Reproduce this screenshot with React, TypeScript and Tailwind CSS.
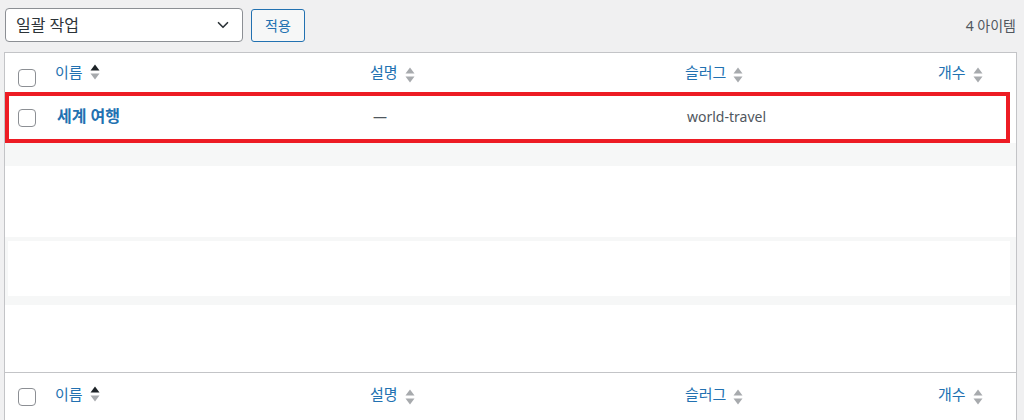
import { ChevronDown } from 'lucide-react';

const FONT = '"Noto Sans", "Noto Sans CJK KR", sans-serif';

interface SortIconProps {
  active?: boolean;
}

function SortIcon({ active = false }: SortIconProps) {
  return (
    <svg
      width="10"
      height="16"
      viewBox="0 0 10 16"
      className={`ml-[7px] shrink-0 ${active ? '-mt-[2px]' : 'mt-[5px]'}`}
      aria-hidden="true"
    >
      <path d="M5 0.5 L9.5 6.5 L0.5 6.5 Z" fill={active ? '#1d2327' : '#a7aaad'} />
      <path d="M0.5 9.5 L9.5 9.5 L5 15.5 Z" fill="#a7aaad" />
    </svg>
  );
}

function Checkbox() {
  return <span className="block h-[18px] w-[18px] rounded-[4px] border border-[#8c8f94] bg-white" />;
}

function HeaderRow({ footer }: { footer?: boolean }) {
  return (
    <div
      className={`flex items-center text-[15px] text-[#2271b1] ${
        footer ? 'h-[44px] border-t border-[#c3c4c7]' : 'h-[39px]'
      }`}
    >
      <div className={`flex w-[50px] shrink-0 justify-start pl-[13px] ${footer ? 'mt-[4px]' : 'mt-[10px]'}`}>
        <Checkbox />
      </div>
      <div className="flex w-[315px] shrink-0 items-center">
        <span>이름</span>
        <SortIcon active />
      </div>
      <div className="flex w-[315px] shrink-0 items-center">
        <span>설명</span>
        <SortIcon />
      </div>
      <div className="flex w-[253px] shrink-0 items-center">
        <span>슬러그</span>
        <SortIcon />
      </div>
      <div className="flex items-center">
        <span>개수</span>
        <SortIcon />
      </div>
    </div>
  );
}

export default function App() {
  return (
    <div className="h-[420px] overflow-hidden bg-[#f0f0f1]" style={{ fontFamily: FONT }}>
      {/* Bulk actions bar */}
      <div className="flex items-center pl-[5px] pr-[8px] pt-[8px]">
        <div className="flex h-[34px] w-[238px] items-center justify-between rounded-[4px] border border-[#8c8f94] bg-white pl-[10px] pr-[10px] text-[16px] text-[#2c3338]">
          <span>일괄 작업</span>
          <ChevronDown className="h-[18px] w-[18px] text-[#2c3338]" strokeWidth={2.2} />
        </div>
        <button className="ml-[8px] flex h-[33px] w-[54px] items-center justify-center rounded-[3px] border border-[#2271b1] bg-[#f6f7f7] text-[14px] text-[#2271b1]">
          적용
        </button>
        <span className="ml-auto text-[14px] text-[#50575e]">4 아이템</span>
      </div>

      {/* Terms table */}
      <div className="ml-[4px] mr-[7px] mt-[10px] border border-[#c3c4c7] bg-white pb-[10px]">
        <HeaderRow />

        {/* Highlighted row */}
        <div className="mr-[6px] flex h-[51px] items-center border-4 border-[#ed1c24] text-[14px] text-[#50575e]">
          <div className="flex w-[48px] shrink-0 pl-[9px]">
            <Checkbox />
          </div>
          <div className="-mt-[3px] w-[316px] shrink-0 text-[16px] font-bold text-[#2271b1]">세계 여행</div>
          <div className="-mt-[3px] w-[314px] shrink-0">—</div>
          <div className="-mt-[3px]">world-travel</div>
        </div>

        {/* Empty rows */}
        <div className="h-[23px] bg-[#f6f7f7]" />
        <div className="h-[71px] bg-white" />
        <div className="h-[4px] bg-[#f6f7f7]" />
        <div className="flex h-[55px] bg-[#f6f7f7] pl-[3px] pr-[6px]">
          <div className="flex-1 bg-white" />
        </div>
        <div className="h-[9px] bg-[#f6f7f7]" />
        <div className="h-[67px] bg-white" />

        <HeaderRow footer />
      </div>
    </div>
  );
}
